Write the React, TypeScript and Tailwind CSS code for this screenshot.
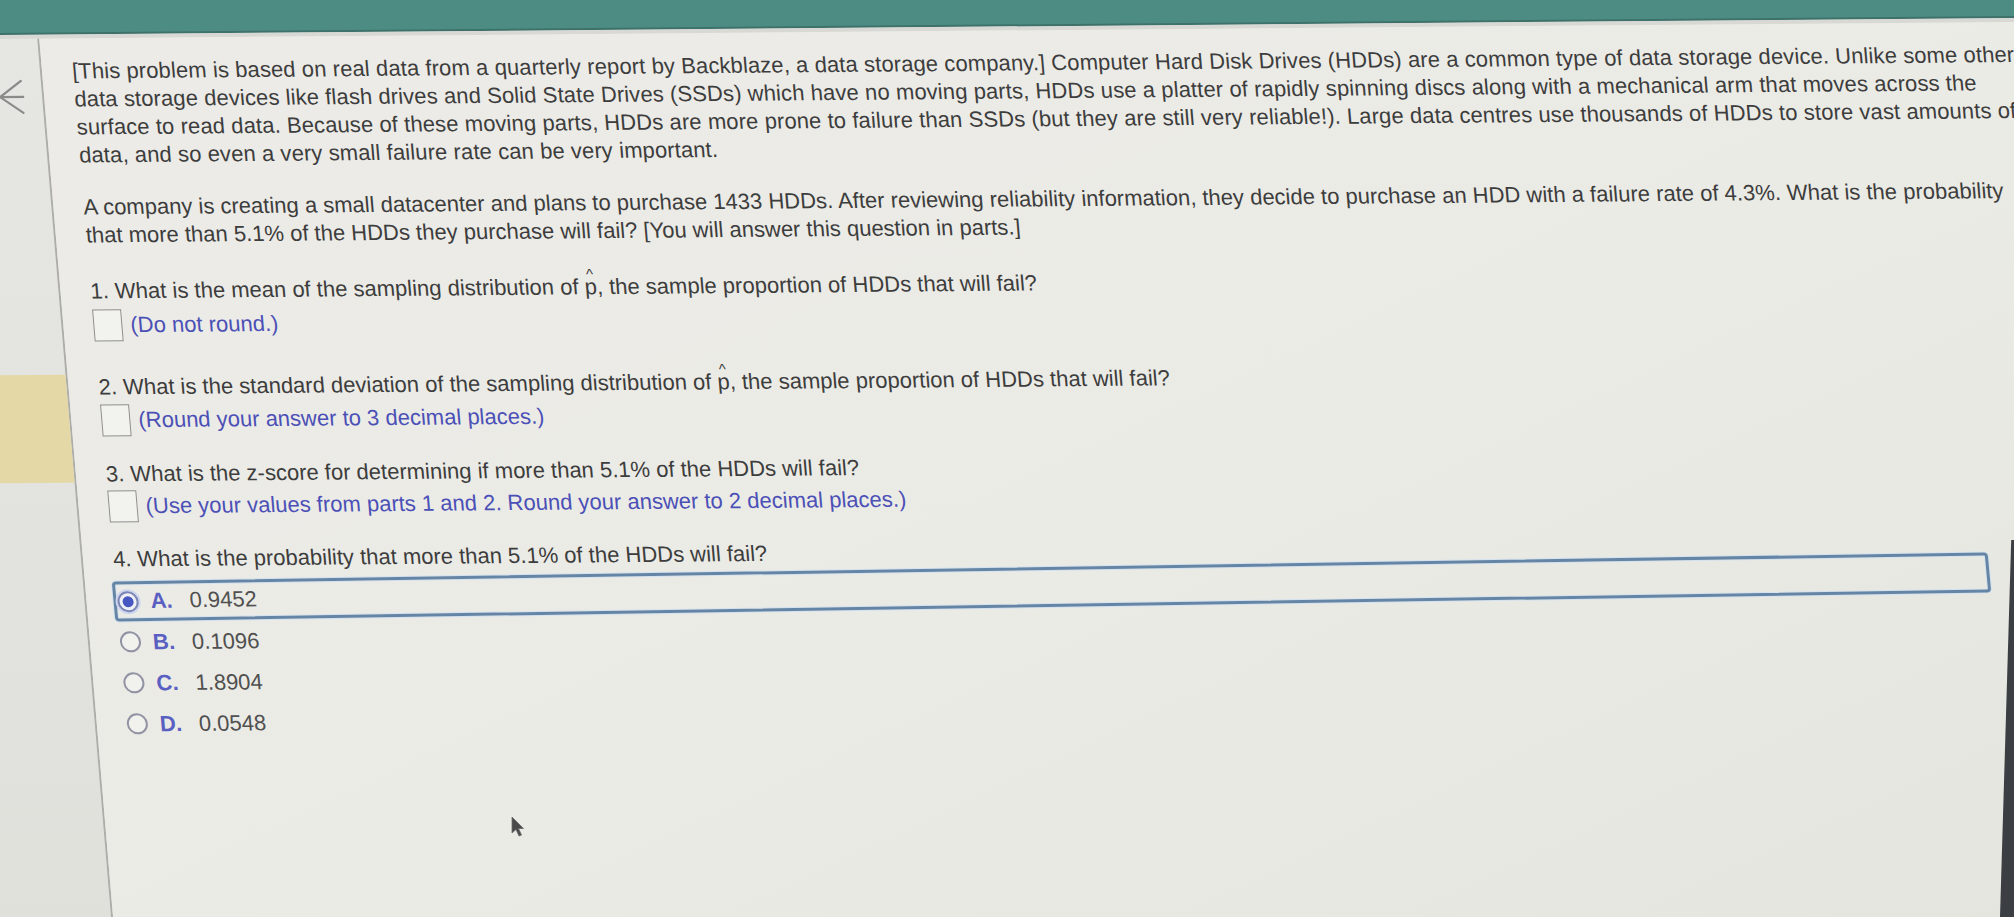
import React from "react";

const para1 = [
  "[This problem is based on real data from a quarterly report by Backblaze, a data storage company.] Computer Hard Disk Drives (HDDs) are a common type of data storage device. Unlike some other",
  "data storage devices like flash drives and Solid State Drives (SSDs) which have no moving parts, HDDs use a platter of rapidly spinning discs along with a mechanical arm that moves across the",
  "surface to read data. Because of these moving parts, HDDs are more prone to failure than SSDs (but they are still very reliable!). Large data centres use thousands of HDDs to store vast amounts of",
  "data, and so even a very small failure rate can be very important.",
];

const para2 = [
  "A company is creating a small datacenter and plans to purchase 1433 HDDs. After reviewing reliability information, they decide to purchase an HDD with a failure rate of 4.3%. What is the probability",
  "that more than 5.1% of the HDDs they purchase will fail? [You will answer this question in parts.]",
];

const options = [
  { letter: "A.", value: "0.9452", selected: true },
  { letter: "B.", value: "0.1096" },
  { letter: "C.", value: "1.8904" },
  { letter: "D.", value: "0.0548" },
];

function PHat() {
  return (
    <span className="relative inline-block">
      p
      <span className="absolute left-1/2 -translate-x-1/2 -top-[7px] text-[15px] leading-none">^</span>
    </span>
  );
}

function AnswerRow({ hint, mt }: { hint: string; mt: string }) {
  return (
    <div className={`flex items-center h-[36px] gap-[8px] ${mt}`}>
      <span className="w-[29px] h-[32px] border-[1.5px] border-[#8e8e8c] bg-[#f2f2ef]" />
      <span className="text-[#4b50b6]">{hint}</span>
    </div>
  );
}

function Radio({ selected }: { selected?: boolean }) {
  return selected ? (
    <span className="w-[21px] h-[21px] rounded-full border-2 border-[#7c86b4] bg-[#eef0f6] shadow-[0_0_0_2px_#cdd6ee] flex items-center justify-center shrink-0">
      <span className="w-[11px] h-[11px] rounded-full bg-[#4757c2]" />
    </span>
  ) : (
    <span className="w-[21px] h-[21px] rounded-full border-2 border-[#9293a3] bg-[#f1f1ee] shrink-0" />
  );
}

export default function App() {
  return (
    <div className="relative w-[2014px] h-[917px] overflow-hidden bg-[#e2e2de] font-['Liberation_Sans',Arial,sans-serif]">
      {/* the photo is taken at an angle: one skew for the whole page */}
      <div className="-ml-[100px] w-[2300px] h-[1000px] flex flex-col origin-[100px_0px] [transform:matrix(1,-0.0085,0.084,1,0,0)]">
        <div className="h-[35px] shrink-0 bg-[#4c8c83] border-b-2 border-[#3e716a]" />
        <div className="h-[4px] shrink-0 bg-[#d8d8d4]" />
        <div className="flex flex-1">
          <aside className="w-[136px] shrink-0 flex flex-col bg-linear-to-b from-[#e6e6e3] to-[#dfe0da] border-r-2 border-[#adadaa]">
            <svg className="self-end mr-[18px] mt-[40px]" width="26" height="36" viewBox="0 0 26 36" fill="none" stroke="#8b8b89" strokeWidth="2.2" strokeLinecap="round">
              <path d="M24 2 L2 18 L24 34" />
              <path d="M2 18 H26" />
            </svg>
            <div className="mt-[260px] h-[108px] bg-[#e4d9a6]" />
          </aside>
          <main className="flex-1 pl-[30px] pt-[19px] text-[22px] leading-[28px] text-[#3d3d3d] bg-linear-to-br from-[#ecebe7] via-[#ebebe6] to-[#e2e4dc]">
            <div className="whitespace-nowrap tracking-[0.1px]">
              {para1.map((l) => (
                <div key={l}>{l}</div>
              ))}
            </div>
            <div className="whitespace-nowrap mt-[24px]">
              {para2.map((l) => (
                <div key={l}>{l}</div>
              ))}
            </div>

            <div className="mt-[28px] whitespace-nowrap">
              1. What is the mean of the sampling distribution of <PHat />, the sample proportion of HDDs that will fail?
            </div>
            <AnswerRow hint="(Do not round.)" mt="mt-[2px]" />

            <div className="mt-[30px] whitespace-nowrap">
              2. What is the standard deviation of the sampling distribution of <PHat />, the sample proportion of HDDs that will fail?
            </div>
            <AnswerRow hint="(Round your answer to 3 decimal places.)" mt="mt-[1px]" />

            <div className="mt-[22px] whitespace-nowrap">3. What is the z-score for determining if more than 5.1% of the HDDs will fail?</div>
            <AnswerRow hint="(Use your values from parts 1 and 2. Round your answer to 2 decimal places.)" mt="mt-0" />

            <div className="mt-[21px] whitespace-nowrap">4. What is the probability that more than 5.1% of the HDDs will fail?</div>
            <div className="mt-[8px] flex flex-col">
              {options.map((o) =>
                o.selected ? (
                  <div
                    key={o.letter}
                    className="-ml-[3px] w-[1877px] h-[40px] flex items-center pl-[1px] border-[3px] border-[#6585a6] rounded-[4px] origin-left -rotate-[0.4deg] shadow-[0_0_0_1px_#d3e2f0,inset_0_0_0_1px_#d3e2f0]"
                  >
                    <Radio selected />
                    <span className="ml-[12px] w-[39px] font-bold text-[#5a5fc2]">{o.letter}</span>
                    <span className="text-[#505050]">{o.value}</span>
                  </div>
                ) : (
                  <div key={o.letter} className="h-[41px] flex items-center">
                    <Radio />
                    <span className="ml-[12px] w-[39px] font-bold text-[#5a5fc2]">{o.letter}</span>
                    <span className="text-[#505050]">{o.value}</span>
                  </div>
                )
              )}
            </div>
          </main>
        </div>
      </div>

      {/* mouse pointer */}
      <svg className="absolute left-[511px] top-[816px]" width="14" height="22" viewBox="0 0 14 22">
        <path d="M1 1 L1 17 L5 13.5 L8 20 L10.5 19 L7.5 12.5 L12.5 12.5 Z" fill="#4a4a4a" stroke="#6a6a6a" strokeWidth="0.8" />
      </svg>

      {/* screen bezel at right */}
      <div className="absolute right-0 top-[540px] w-[14px] h-[377px] bg-[#3b3e42] [clip-path:polygon(100%_0,100%_100%,0_100%,80%_0)]" />
    </div>
  );
}
